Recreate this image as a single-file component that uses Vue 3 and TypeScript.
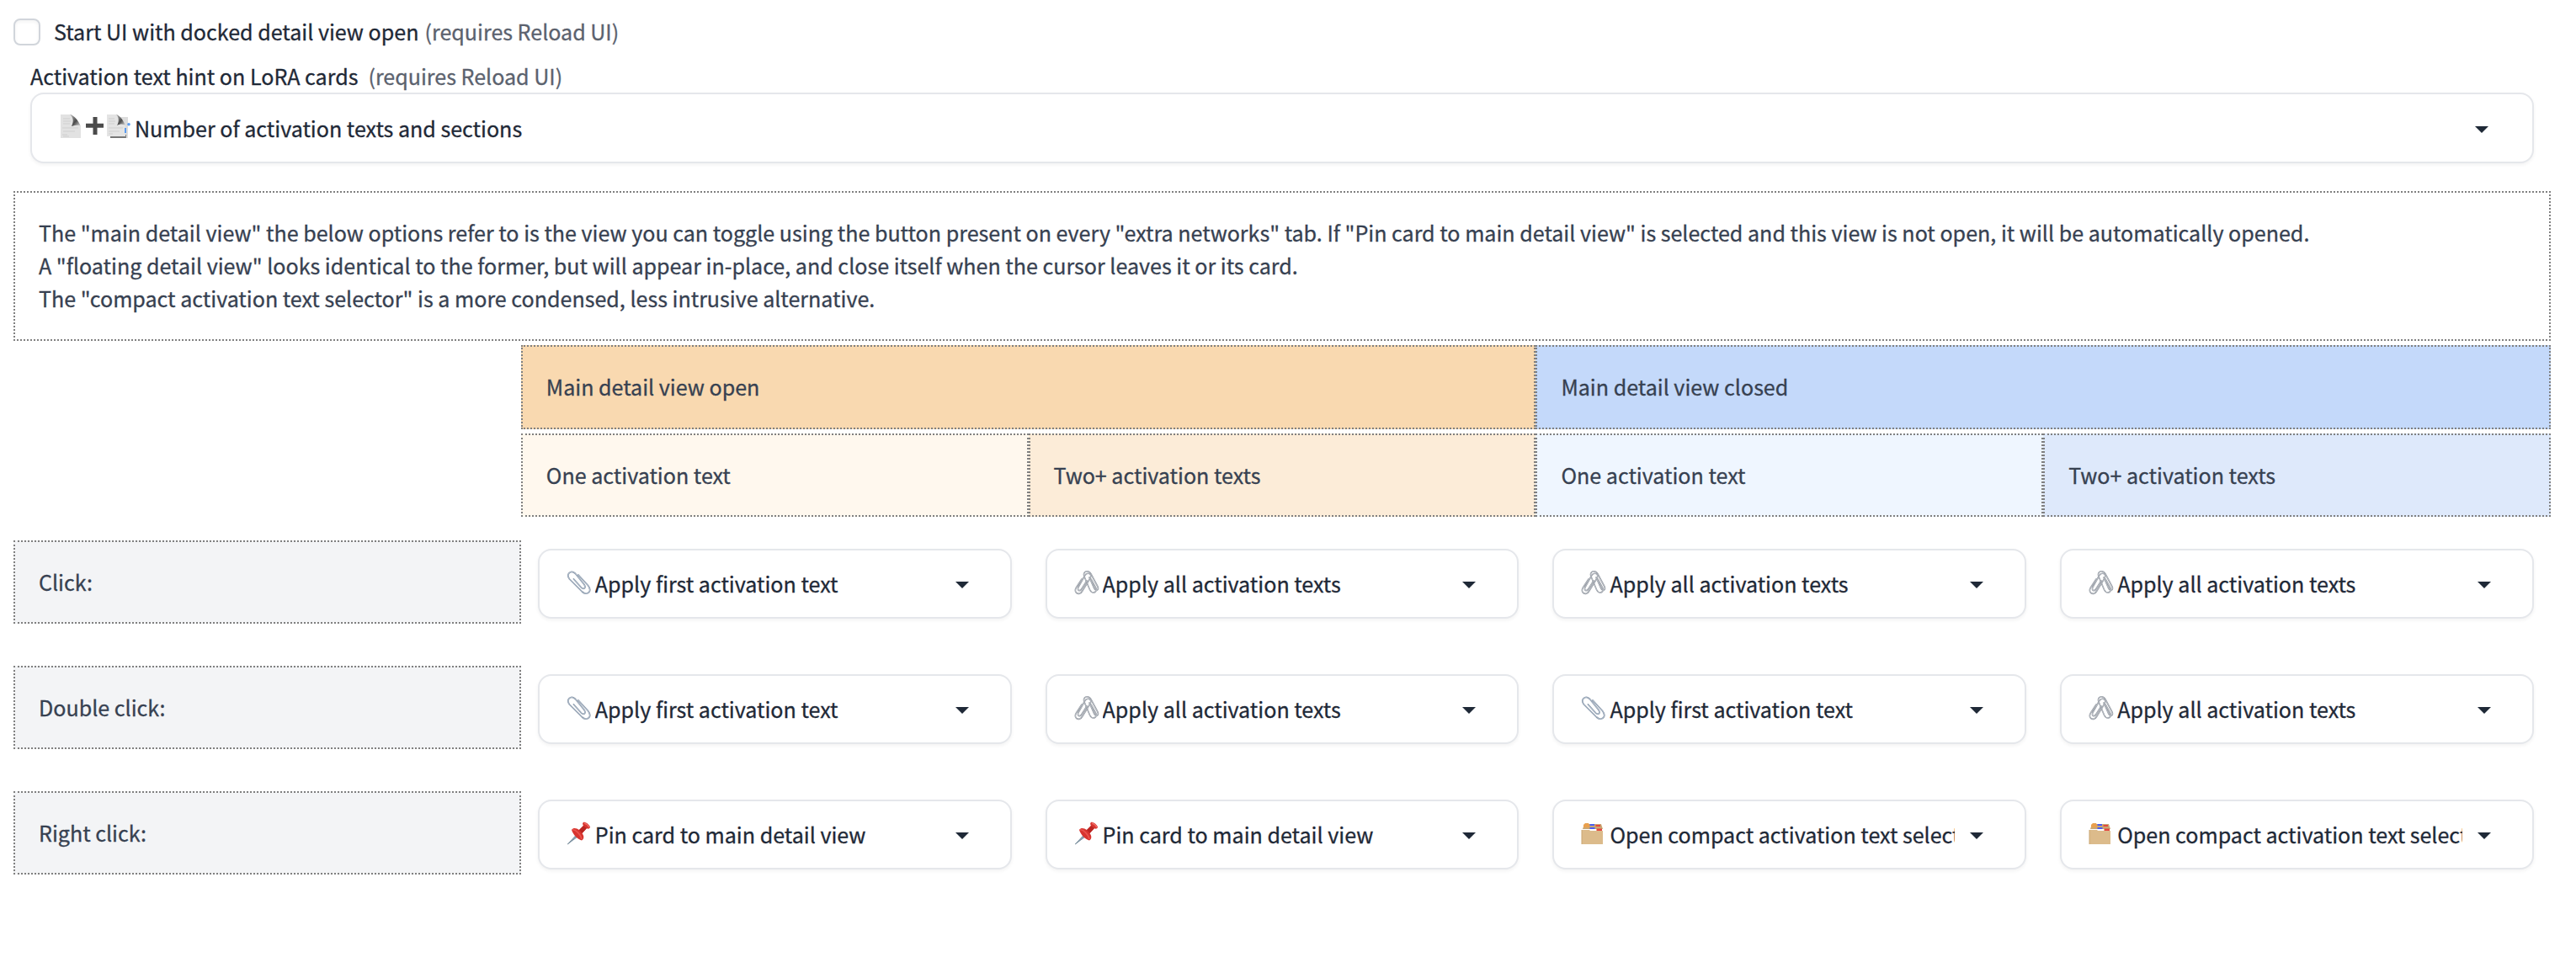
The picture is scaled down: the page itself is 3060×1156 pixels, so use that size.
<script setup lang="ts">
type Icon = 'clip' | 'clips' | 'pin' | 'box'

interface Option {
  icon: Icon
  label: string
}

interface ActionRow {
  title: string
  options: Option[]
}

const first: Option = { icon: 'clip', label: 'Apply first activation text' }
const all: Option = { icon: 'clips', label: 'Apply all activation texts' }
const pin: Option = { icon: 'pin', label: 'Pin card to main detail view' }
const compact: Option = { icon: 'box', label: 'Open compact activation text selector' }

const rows: ActionRow[] = [
  { title: 'Click:', options: [first, all, all, all] },
  { title: 'Double click:', options: [first, all, first, all] },
  { title: 'Right click:', options: [pin, pin, compact, compact] },
]

const notes: string[] = [
  'The "main detail view" the below options refer to is the view you can toggle using the button present on every "extra networks" tab. If "Pin card to main detail view" is selected and this view is not open, it will be automatically opened.',
  'A "floating detail view" looks identical to the former, but will appear in-place, and close itself when the cursor leaves it or its card.',
  'The "compact activation text selector" is a more condensed, less intrusive alternative.',
]
</script>

<template>
  <main class="settings">
    <label class="check-row">
      <span class="checkbox"></span>
      <span class="label">Start UI with docked detail view open</span>
      <span class="hint">(requires Reload UI)</span>
    </label>

    <div class="field-title">
      <span class="label">Activation text hint on LoRA cards</span>
      <span class="hint">(requires Reload UI)</span>
    </div>

    <div class="select wide">
      <svg class="doc-icons" width="88" height="32" viewBox="0 0 88 32">
        <defs>
          <linearGradient id="curl" x1="0" y1="0" x2="1" y2="1">
            <stop offset="0" stop-color="#b9b9b9" />
            <stop offset=".55" stop-color="#4c4c4c" />
            <stop offset="1" stop-color="#dedede" />
          </linearGradient>
        </defs>
        <path d="M0 2H13C16 5 16 9 16 11C19 10 22 12 24 16V30H0Z" fill="#e2e2e2" />
        <path d="M11 2C16 3 21 9 24 16C21 14 18 15 13 16C16 10 15 5 11 2Z" fill="url(#curl)" />
        <path d="M3 7H11M3 10H12M3 13H11M2 18H21M3 22H17M2 26H8M3 28H10" stroke="#cfcfcf" fill="none" />
        <path d="M38.5 5H43.5V12.8H51V17.8H43.5V26H38.5V17.8H30V12.8H38.5Z" fill="#4b4b4b" />
        <path d="M60 5H80V30H60Z" fill="#dcdcdc" />
        <path d="M59 29H77V27H61" stroke="#777" stroke-width="1.8" fill="none" />
        <path d="M55 2H67C70 5 70 9 70 11C73 10 75 12 77 15V28H55Z" fill="#e4e4e4" />
        <path d="M66 2C70 3 74 8 77 15C74 13 71 13 67 15C70 10 69 5 66 2Z" fill="url(#curl)" />
        <path d="M57 7H64M57 10H65M57 13H64M57 18H74M57 22H70M57 25H62" stroke="#cfcfcf" fill="none" />
        <path d="M77 18V24" stroke="#5b9cf0" stroke-width="2" />
        <circle cx="81" cy="13.8" r="1.8" fill="#5b9cf0" />
      </svg>
      <span class="value">Number of activation texts and sections</span>
      <svg class="caret" width="16" height="8" viewBox="0 0 16 8"><path d="M0 0H16L8 8Z" /></svg>
    </div>

    <section class="cell notes">
      <p v-for="note in notes" :key="note">{{ note }}</p>
    </section>

    <div class="grid heads">
      <div class="cell open">Main detail view open</div>
      <div class="cell closed">Main detail view closed</div>
    </div>
    <div class="grid subs">
      <div class="cell open-one">One activation text</div>
      <div class="cell open-two">Two+ activation texts</div>
      <div class="cell closed-one">One activation text</div>
      <div class="cell closed-two">Two+ activation texts</div>
    </div>

    <div v-for="row in rows" :key="row.title" class="grid action">
      <div class="cell title">{{ row.title }}</div>
      <div v-for="(option, i) in row.options" :key="i" class="slot">
        <div class="select">
          <svg v-if="option.icon === 'clip'" class="icon" width="32" height="32" viewBox="0 0 32 32">
            <g fill="none" stroke-linecap="round" stroke-linejoin="round">
              <path
                d="M14 6L25.500 18.500C31 25.500 24.500 31.500 18.500 26L3.500 11C-1 5 5 -.5 10.500 4.500L21 17.500C23.500 21.500 20.500 24 17.500 21L8.500 11"
                stroke="#8492a3" stroke-width="1.700"
              />
              <path
                d="M14 6L25.500 18.500C31 25.500 24.500 31.500 18.500 26L3.500 11C-1 5 5 -.5 10.500 4.500L21 17.500C23.500 21.500 20.500 24 17.500 21L8.500 11"
                stroke="#c3d0df" stroke-width=".7"
              />
            </g>
          </svg>
          <svg v-else-if="option.icon === 'clips'" class="icon" width="32" height="32" viewBox="0 0 32 32">
            <g fill="none" stroke-linecap="round" stroke-linejoin="round">
              <path
                d="M18 9L23.500 21.500C26.500 27 30 23.500 27.500 19L20 5C17 -.5 9.500 1.500 12 8L18.500 23.500C21.500 29.500 27.500 27 26 22L20 11"
                stroke="#8d939b" stroke-width="1.600"
              />
              <path
                d="M18 9L23.500 21.500C26.500 27 30 23.500 27.500 19L20 5C17 -.5 9.500 1.500 12 8L18.500 23.500C21.500 29.500 27.500 27 26 22L20 11"
                stroke="#d5d9df" stroke-width=".6"
              />
              <path
                d="M9 11L2.500 21C-1.500 27 6 31.500 9.500 25.500L19 10C22 4.500 15.500 2 12.500 7L5 20.500C3 25 7 26 9 22.500L15 13"
                stroke="#8d939b" stroke-width="1.600"
              />
              <path
                d="M9 11L2.500 21C-1.500 27 6 31.500 9.500 25.500L19 10C22 4.500 15.500 2 12.500 7L5 20.500C3 25 7 26 9 22.500L15 13"
                stroke="#d5d9df" stroke-width=".6"
              />
            </g>
          </svg>
          <svg v-else-if="option.icon === 'pin'" class="icon" width="32" height="32" viewBox="0 0 32 32">
            <path d="M1.200 28L11 17.500L12.500 19.500Z" fill="#8ba0b0" stroke="#6f8596" stroke-width=".8" />
            <path d="M6 11C8 8 12 9 15 11L20 6C18 3 20 1 22 2C25 3 28 6 28 8C27 10 25 10 24 9L18.500 15C21 18 21 22 18 23.500C13 22 8 17 6 11Z" fill="#d8342f" />
            <path d="M15 11L20 6L24 9L18.500 15Z" fill="#b92522" />
            <path d="M7 11C10 10 17 16 18 22" fill="none" stroke="#e9554f" stroke-width="1.500" />
            <path d="M21 3C23 3.500 26 6 27 8" fill="none" stroke="#ee6a63" stroke-width="1.500" />
          </svg>
          <svg v-else class="icon" width="32" height="32" viewBox="0 0 32 32">
            <path d="M2 10L4 4H24L26 10Z" fill="#c9a673" />
            <path d="M3 8V5L5 3H9L10 5V8Z" fill="#e9a04e" />
            <path d="M10.500 6V4H16V6ZM10.500 10V8H16.500V10Z" fill="#4b5df0" />
            <path d="M17.500 7V5H23V7ZM18.500 12V9.500H25V12Z" fill="#e4473f" />
            <path d="M1 11H10L11 12H26V28H1Z" fill="#dcbb8b" />
            <path d="M1 11V28" stroke="#c9a673" />
          </svg>
          <span class="value">{{ option.label }}</span>
          <svg class="caret" width="16" height="8" viewBox="0 0 16 8"><path d="M0 0H16L8 8Z" /></svg>
        </div>
      </div>
    </div>
  </main>
</template>

<style>
body {
  margin: 0;
  background: #fff;
}
</style>

<style scoped>
.settings {
  box-sizing: border-box;
  width: 3060px;
  height: 1156px;
  padding: 18px 30px 0 16px;
  overflow: hidden;
  background: #fff;
  color: #374151;
  font-family: 'Noto Sans CJK SC', 'Noto Sans', sans-serif;
  font-size: 25.07px;
  line-height: 39px;
  -webkit-text-stroke: 0.3px currentColor;
}

.check-row,
.field-title {
  display: flex;
  align-items: center;
  height: 40px;
  white-space: pre;
}

.check-row .label,
.check-row .hint {
  padding-bottom: 2px;
}

.checkbox {
  box-sizing: border-box;
  width: 32px;
  height: 32px;
  margin-right: 16px;
  border: 2px solid #d1d5db;
  border-radius: 8px;
  background: #fff;
  box-shadow: inset 0 2px 4px rgba(0, 0, 0, 0.05);
}

.label {
  color: #1f2937;
}

.hint {
  margin-left: 7px;
  color: #5b626e;
}

.field-title {
  height: 39px;
  margin: 13px 0 0 20px;
}

.field-title .hint {
  margin-left: 12px;
}

.select {
  box-sizing: border-box;
  display: flex;
  align-items: center;
  height: 83px;
  padding: 0 49px 0 32px;
  border: 2px solid #e5e7eb;
  border-radius: 16px;
  background: #fff;
  box-shadow: 0 2px 4px rgba(0, 0, 0, 0.05);
  color: #1f2937;
}

.wide {
  height: 84px;
  margin: 0 20px;
  padding: 0 52px 0 34px;
}

.doc-icons,
.icon,
.caret {
  flex: none;
}

.doc-icons {
  margin-top: -4px;
}

.icon {
  margin: -1px 2px 0 0;
}

.value {
  flex: 1;
  min-width: 0;
  overflow: hidden;
  white-space: nowrap;
}

.caret {
  margin: 3px 0 0 18px;
  fill: #1f2937;
}

.cell {
  box-sizing: border-box;
  padding: 28px;
  border: 2px dotted #808080;
}

.notes {
  height: 178px;
  margin: 33px 0 5px;
}

.notes p {
  margin: 0;
  line-height: 39.2px;
  white-space: nowrap;
}

.grid {
  display: grid;
  grid-template-columns: repeat(5, 1fr);
}

.heads {
  height: 100px;
  margin-bottom: 5px;
}

.open {
  grid-column: 2 / 4;
  background: #f9d9b0;
}

.closed {
  grid-column: 4 / 6;
  background: #c4d9fa;
}

.subs {
  height: 99px;
  margin-bottom: 28px;
}

.open-one {
  grid-column: 2;
  background: #fff8ee;
}

.open-two {
  background: #fcecd8;
}

.closed-one {
  background: #eff6ff;
}

.closed-two {
  background: #dee9fb;
}

.action {
  height: 99px;
  margin-bottom: 50px;
}

.title {
  background: #f3f4f6;
}

.slot {
  min-width: 0;
  padding: 10px 20px 0;
}
</style>
